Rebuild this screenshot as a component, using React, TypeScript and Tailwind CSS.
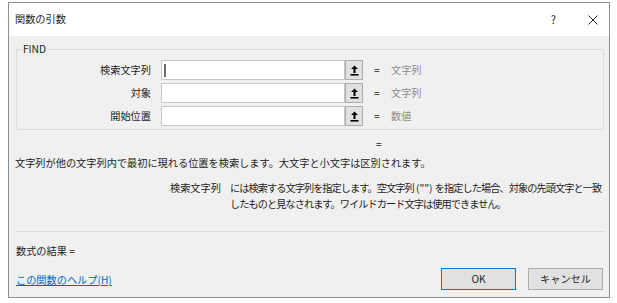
import * as React from "react";

const PickButton = () => (
  <div className="w-[18px] h-[20px] border border-[#adadad] bg-[#e1e1e1] flex items-center justify-center shrink-0">
    <svg width="9" height="11" viewBox="0 0 9 11">
      <path d="M4.5 0.5 L8 4 H5.5 V8 H3.5 V4 H1 Z" fill="#000" />
      <rect x="0.5" y="9" width="8" height="1.6" fill="#000" />
    </svg>
  </div>
);

const ArgRow = ({ label, value, cursor }: { label: string; value: string; cursor?: boolean }) => (
  <div className="flex items-center h-[20px]">
    <div className="w-[134px] text-right">{label}</div>
    <div className="ml-[10px] w-[184px] h-[20px] border border-[#c8c8c8] bg-white flex items-center pl-[2px]">
      {cursor && <div className="w-[2px] h-[13px] bg-[#6e6e6e]" />}
    </div>
    <PickButton />
    <div className="ml-[11px] w-[6px]">=</div>
    <div className="ml-[11px] text-[#8c8c8c]">{value}</div>
  </div>
);

export default function App() {
  return (
    <div className="w-[617px] h-[303px] bg-white pt-[2px] pl-[8px] font-['Noto_Sans_CJK_JP',sans-serif] text-[10.2px] leading-none text-[#1e1e1e]">
      <div className="w-[602px] h-[296px] border border-[#8f8f8f] bg-[#f0f0f0] flex flex-col">
        {/* title bar */}
        <div className="h-[33px] bg-white flex items-center pl-[6px] pr-[11px] shrink-0">
          <span>関数の引数</span>
          <span className="ml-auto text-[11px]">?</span>
          <svg className="ml-[32px]" width="10" height="10" viewBox="0 0 10 10">
            <path d="M0.5 0.5 L9.5 9.5 M9.5 0.5 L0.5 9.5" stroke="#222" strokeWidth="1" />
          </svg>
        </div>

        <div className="flex-1 pl-[7px] pr-[5px] pb-[7px] flex flex-col">
          <fieldset className="mt-[8px] border border-[#dcdcdc] pb-[3px]">
            <legend className="ml-[5px] px-[1px]">FIND</legend>
            <div className="mt-[6px] flex flex-col gap-[3px]">
              <ArgRow label="検索文字列" value="文字列" cursor />
              <ArgRow label="対象" value="文字列" />
              <ArgRow label="開始位置" value="数値" />
            </div>
          </fieldset>

          <div className="mt-[9px] pl-[360px]">=</div>

          <div className="mt-[9px] -ml-[1px] whitespace-nowrap">
            文字列が他の文字列内で最初に現れる位置を検索します。大文字と小文字は区別されます。
          </div>

          <div className="mt-[14px] flex whitespace-nowrap">
            <div className="ml-[154px] w-[52px]">検索文字列</div>
            <div className="ml-[8px] leading-[16px] -mt-[3px] tracking-[-0.95px]">
              には検索する文字列を指定します。空文字列<span className="tracking-normal"> ("") </span>を指定した場合、対象の先頭文字と一致
              <br />
              したものと見なされます。ワイルドカード文字は使用できません。
            </div>
          </div>

          <div className="flex-1" />

          <div className="h-px bg-[#dcdcdc]" />

          <div className="mt-[14px]">数式の結果 =</div>

          <div className="mt-[12px] flex items-center">
            <a className="text-[#0066cc] underline pt-[3px]">この関数のヘルプ(H)</a>
            <button className="ml-auto w-[75px] h-[22px] border border-[#0078d7] bg-[#e1e1e1]">OK</button>
            <button className="ml-[12px] mr-[1px] w-[75px] h-[22px] border border-[#adadad] bg-[#e1e1e1]">キャンセル</button>
          </div>
        </div>
      </div>
    </div>
  );
}
